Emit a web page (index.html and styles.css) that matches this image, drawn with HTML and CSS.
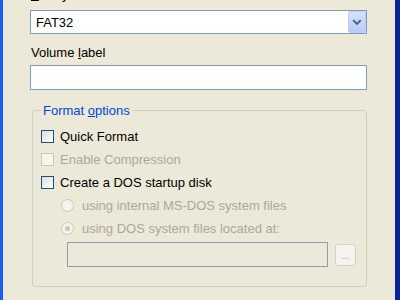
FILE: index.html
```html
<!DOCTYPE html>
<html>
<head>
<meta charset="utf-8">
<link rel="stylesheet" href="styles.css">
</head>
<body>
<div class="window">
  <div class="pane">
    <div class="label first"><u>F</u>ile system</div>
    <div class="combo">
      <span class="val">FAT32</span>
      <span class="drop">
        <svg width="17" height="20" viewBox="0 0 17 20"><path d="M4.5 8 L8.5 12 L12.5 8" fill="none" stroke="#4d6185" stroke-width="2.2"/></svg>
      </span>
    </div>
    <div class="label">Volume <u>l</u>abel</div>
    <div class="edit"></div>
    <fieldset class="group">
      <legend>Format <u>o</u>ptions</legend>
      <div class="row"><span class="check"></span><span>Quick Format</span></div>
      <div class="row disabled"><span class="check off"></span><span>Enable Compression</span></div>
      <div class="row"><span class="check"></span><span>Create a DOS startup disk</span></div>
      <div class="row sub disabled"><span class="radio"></span><span>using internal MS-DOS system files</span></div>
      <div class="row sub disabled"><span class="radio on"></span><span>using DOS system files located at:</span></div>
      <div class="pathrow">
        <div class="path"></div>
        <div class="browse">...</div>
      </div>
    </fieldset>
  </div>
</div>
</body>
</html>
```

FILE: styles.css
```css
html, body {
  margin: 0;
  padding: 0;
  width: 400px;
  height: 300px;
  overflow: hidden;
  background: #ece9d8;
}
.window {
  box-sizing: border-box;
  width: 400px;
  height: 300px;
  border-left: 3px solid #1a5ef0;
  border-right: 5px solid #0a2399;
  background: #ece9d8;
  font-family: "Liberation Sans", Arial, sans-serif;
  font-size: 13px;
  line-height: 15px;
  color: #000;
  overflow: hidden;
}
.pane {
  padding-left: 27px;
  width: 337px;
}
.label {
  height: 15px;
  margin-top: 11px;
  padding-left: 1px;
}
.label.first {
  margin-top: -13px;
}
.combo {
  box-sizing: border-box;
  margin-top: 8px;
  height: 24px;
  border: 1px solid #7f9db9;
  background: #fff;
  display: flex;
  align-items: center;
  justify-content: space-between;
}
.val {
  padding-left: 5px;
}
.drop {
  box-sizing: border-box;
  width: 18px;
  height: 22px;
  margin-right: 0;
  border: 1px solid #b9cdf6;
  border-radius: 2px;
  background: linear-gradient(#d6e3fd, #b6cbf7);
  display: flex;
  align-items: center;
  justify-content: center;
}
.edit {
  box-sizing: border-box;
  margin-top: 5px;
  height: 25px;
  border: 1px solid #7f9db9;
  background: #fff;
}
.group {
  box-sizing: border-box;
  margin: 13px 0 0 2px;
  padding: 7px 10px 19px 8px;
  height: 184px;
  border: 1px solid #d0d0bf;
  border-radius: 3px;
}
.group legend {
  padding: 0 2px;
  color: #0046d5;
  line-height: 15px;
}
.row {
  height: 23px;
  display: flex;
  align-items: center;
  gap: 6px;
}
.row.sub {
  padding-left: 20px;
  gap: 8px;
}
.disabled {
  color: #aca899;
}
.check {
  box-sizing: border-box;
  width: 13px;
  height: 13px;
  border: 1px solid #1c5180;
  background: linear-gradient(135deg, #dcdcd7, #fff);
  flex: none;
}
.check.off {
  border-color: #cac8bb;
  background: #f6f5f0;
}
.radio {
  box-sizing: border-box;
  width: 13px;
  height: 13px;
  border: 1px solid #cac8bb;
  border-radius: 50%;
  background: #f4f3ee;
  flex: none;
  display: flex;
  align-items: center;
  justify-content: center;
}
.radio.on::after {
  content: "";
  width: 5px;
  height: 5px;
  border-radius: 50%;
  background: #cac8bb;
}
.pathrow {
  margin-top: 2px;
  padding-left: 26px;
  display: flex;
  align-items: center;
  gap: 7px;
}
.path {
  box-sizing: border-box;
  width: 261px;
  height: 25px;
  border: 1px solid #909cb0;
  background: #ece9d8;
}
.browse {
  box-sizing: border-box;
  width: 21px;
  height: 22px;
  border: 1px solid #d4d2c6;
  border-radius: 3px;
  background: #f4f3ee;
  color: #aca899;
  font-size: 10px;
  line-height: 14px;
  text-align: center;
  padding-top: 4px;
}
```
